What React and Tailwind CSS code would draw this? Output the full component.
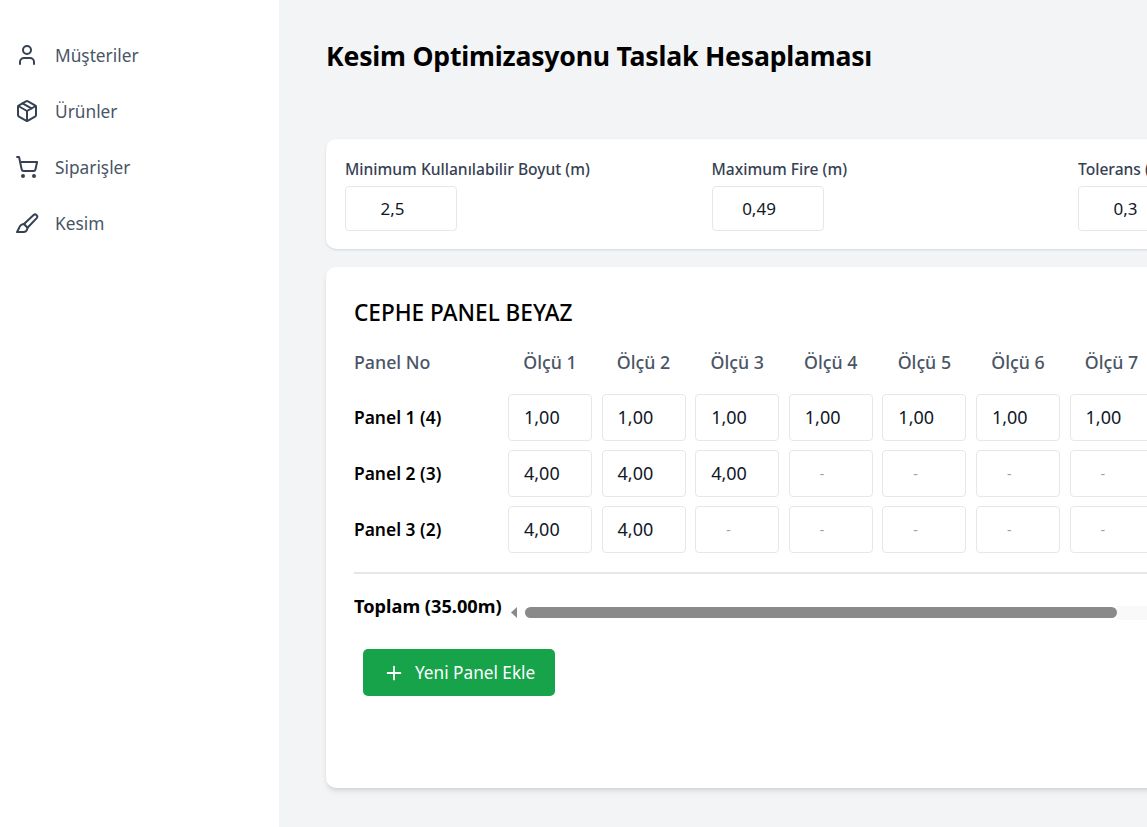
import { User, Package, ShoppingCart, Plus } from 'lucide-react';

const BrushIcon = (props) => (
  <svg viewBox="0 0 24 24" fill="none" stroke="currentColor" strokeWidth="2" strokeLinecap="round" strokeLinejoin="round" {...props}>
    <path d="M9 13 18.6 4a2.2 2.2 0 0 1 3.1 3.1L12.5 16.8" />
    <path d="M9 13c-2.6.3-4.3 1.9-5 4.2L2 21h6.4c2.3 0 3.8-1.8 4.1-4.2z" />
  </svg>
);

const NAV = [
  { label: 'Müşteriler', icon: User },
  { label: 'Ürünler', icon: Package },
  { label: 'Siparişler', icon: ShoppingCart },
  { label: 'Kesim', icon: BrushIcon },
];

const SETTINGS = [
  { label: 'Minimum Kullanılabilir Boyut (m)', value: '2,5' },
  { label: 'Maximum Fire (m)', value: '0,49' },
  { label: 'Tolerans (m)', value: '0,3' },
];

const PANELS = [
  { name: 'Panel 1 (4)', values: ['1,00', '1,00', '1,00', '1,00', '1,00', '1,00', '1,00', '-'] },
  { name: 'Panel 2 (3)', values: ['4,00', '4,00', '4,00', '-', '-', '-', '-', '-'] },
  { name: 'Panel 3 (2)', values: ['4,00', '4,00', '-', '-', '-', '-', '-', '-'] },
];

const COLUMNS = [1, 2, 3, 4, 5, 6, 7, 8];

const Cell = ({ value }) => (
  <div className="h-[47px] border border-gray-200 rounded-[4px] bg-white flex items-center pl-[15px]">
    {value === '-' ? (
      <span className="pl-[15px] text-[14px] text-gray-400">-</span>
    ) : (
      <span className="text-[18px] text-gray-900">{value}</span>
    )}
  </div>
);

export default function App() {
  return (
    <div className="w-[1147px] h-[827px] overflow-hidden flex bg-gray-100 font-['Noto_Sans',sans-serif]">
      {/* Sidebar */}
      <aside className="w-[279px] shrink-0 bg-white pt-[28px] pl-[15px]">
        {NAV.map(({ label, icon: Icon }) => (
          <div key={label} className="h-[56px] flex items-center gap-[16px] text-gray-600">
            <Icon className="w-[24px] h-[24px] mb-[2px] text-gray-700" strokeWidth={2} />
            <span className="text-[17.3px]">{label}</span>
          </div>
        ))}
      </aside>

      {/* Main */}
      <main className="flex-1 min-w-0 pl-[47px] pt-[37px]">
        <h1 className="h-[40px] flex items-center text-[26.6px] font-bold text-black tracking-[-0.2px] whitespace-nowrap">
          Kesim Optimizasyonu Taslak Hesaplaması
        </h1>

        <section className="mt-[62px] w-[1140px] h-[110px] bg-white rounded-[10px] shadow-sm pt-[20px] px-[19px] grid grid-cols-[366.5px_366.5px_366.5px]">
          {SETTINGS.map(({ label, value }) => (
            <div key={label}>
              <div className="h-[22px] flex items-center text-[15.6px] font-medium text-gray-700 whitespace-nowrap">{label}</div>
              <div className="mt-[5px] w-[112px] h-[45px] border border-gray-200 rounded-[4px] flex items-center justify-center pr-[17px] text-[17px] text-gray-900">
                {value}
              </div>
            </div>
          ))}
        </section>

        <section className="mt-[18px] w-[1140px] h-[521px] bg-white rounded-[10px] shadow-md pt-[30px] pl-[28px]">
          <h2 className="h-[32px] flex items-center text-[22.6px] font-medium text-black whitespace-nowrap">CEPHE PANEL BEYAZ</h2>

          <div className="mt-[16px] grid grid-cols-[144.4px_repeat(8,84px)] gap-x-[9.6px] gap-y-[9px] items-center">
            <div className="h-[40px] pb-[6px] flex items-center text-[17.8px] font-medium text-gray-600">Panel No</div>
            {COLUMNS.map((n) => (
              <div key={n} className="h-[40px] pb-[6px] flex items-center justify-center text-[17.8px] font-medium text-gray-600 whitespace-nowrap">
                Ölçü {n}
              </div>
            ))}
            {PANELS.map((panel) => [
              <div key={panel.name} className="text-[17.4px] font-semibold text-black whitespace-nowrap">{panel.name}</div>,
              ...panel.values.map((v, i) => <Cell key={panel.name + i} value={v} />),
            ])}
          </div>

          <div className="mt-[19px] h-[2px] bg-gray-200" />

          <div className="mt-[18px] h-[30px] flex items-center">
            <span className="w-[155px] shrink-0 text-[18.2px] font-bold text-black whitespace-nowrap">Toplam (35.00m)</span>
            {/* Scrollbar */}
            <div className="flex-1 h-[14px] mt-[11px] flex items-center">
              <svg width="16" height="11" viewBox="0 0 16 11" className="shrink-0"><path d="M8 0v11L2 5.5z" fill="#8a8a8a" /></svg>
              <div className="w-[592px] shrink-0 h-[11px] rounded-full bg-[#8a8a8a]" />
              <div className="flex-1 h-[14px] bg-[#f9f9f9]" />
            </div>
          </div>

          <button className="mt-[27px] ml-[9px] w-[192px] h-[47px] pt-[1px] rounded-[5px] bg-[#16a34a] flex items-center pl-[20px] gap-[10px] text-white text-[17.2px]">
            <Plus className="w-[22px] h-[22px]" strokeWidth={2} />
            Yeni Panel Ekle
          </button>
        </section>
      </main>
    </div>
  );
}
